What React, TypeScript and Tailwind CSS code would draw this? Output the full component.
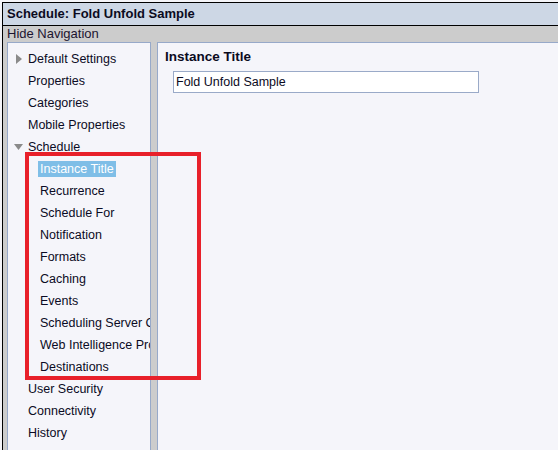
const topItems = ["Default Settings", "Properties", "Categories", "Mobile Properties"]
const scheduleItems = [
    "Instance Title",
    "Recurrence",
    "Schedule For",
    "Notification",
    "Formats",
    "Caching",
    "Events",
    "Scheduling Server Group",
    "Web Intelligence Processing Server",
    "Destinations",
]
const bottomItems = ["User Security", "Connectivity", "History"]

function RightArrow() {
    return (
        <svg width="6" height="10" viewBox="0 0 6 10" className="absolute left-[-10px] top-[6px]">
            <path d="M0 0 L6 5 L0 10 Z" fill="#8a8a8a" />
        </svg>
    )
}

function DownArrow() {
    return (
        <svg width="9" height="6" viewBox="0 0 9 6" className="absolute left-[-12px] top-[8px]">
            <path d="M0 0 L9 0 L4.5 6 Z" fill="#8a8a8a" />
        </svg>
    )
}

function NavItem({ label, child = false, selected = false, arrow }: { label: string; child?: boolean; selected?: boolean; arrow?: "right" | "down" }) {
    return (
        <div className={`relative h-[22px] flex items-center whitespace-nowrap ${child ? "ml-[30px]" : "ml-[18px]"}`}>
            {arrow === "right" && <RightArrow />}
            {arrow === "down" && <DownArrow />}
            <span className={`px-[2px] leading-[16px] ${selected ? "bg-[#7fbee7] text-white" : "text-[#0b0b24]"}`}>{label}</span>
        </div>
    )
}

export default function App() {
    return (
        <div className="w-[558px] h-[450px] overflow-hidden bg-[#f4f4f8] pt-[2px] pl-[2px] relative" style={{ fontFamily: '"Liberation Sans", Arial, sans-serif' }}>
            <div className="h-full border-l border-t border-black bg-[#cccccc] flex flex-col">
                <div className="h-[23px] bg-[#cdd7e5] border-b border-black pl-[4px] flex items-center text-[13px] font-bold text-[#0b0b1e]">
                    Schedule: Fold Unfold Sample
                </div>
                <div className="h-[16px] pl-[4px] flex items-center text-[13px] text-[#1c1430]">
                    Hide Navigation
                </div>
                <div className="flex-1 flex pl-[4px] gap-[6px] min-h-0">
                    <div className="w-[144px] border-t border-l border-r border-[#97a9c9] bg-[#f5f5fa] overflow-hidden pt-[5px] text-[12.5px]">
                        {topItems.map((t, i) => (
                            <NavItem key={t} label={t} arrow={i === 0 ? "right" : undefined} />
                        ))}
                        <NavItem label="Schedule" arrow="down" />
                        {scheduleItems.map((t, i) => (
                            <NavItem key={t} label={t} child selected={i === 0} />
                        ))}
                        {bottomItems.map(t => (
                            <NavItem key={t} label={t} />
                        ))}
                    </div>
                    <div className="flex-1 border-t border-l border-[#97a9c9] bg-[#f5f5fa] pl-[7px] pt-[5px]">
                        <div className="text-[13.5px] font-bold text-[#0b0b1e] leading-[18px]">Instance Title</div>
                        <div className="mt-[5px] ml-[8px] w-[306px] h-[22px] border border-[#9aaac8] bg-white flex items-center pl-[2px] text-[12.5px] text-[#0b0b1e]">
                            Fold Unfold Sample
                        </div>
                    </div>
                </div>
            </div>
            <div className="absolute left-[25px] top-[152px] w-[176px] h-[228px] border-[4px] border-[#e8202a] pointer-events-none" />
        </div>
    )
}
